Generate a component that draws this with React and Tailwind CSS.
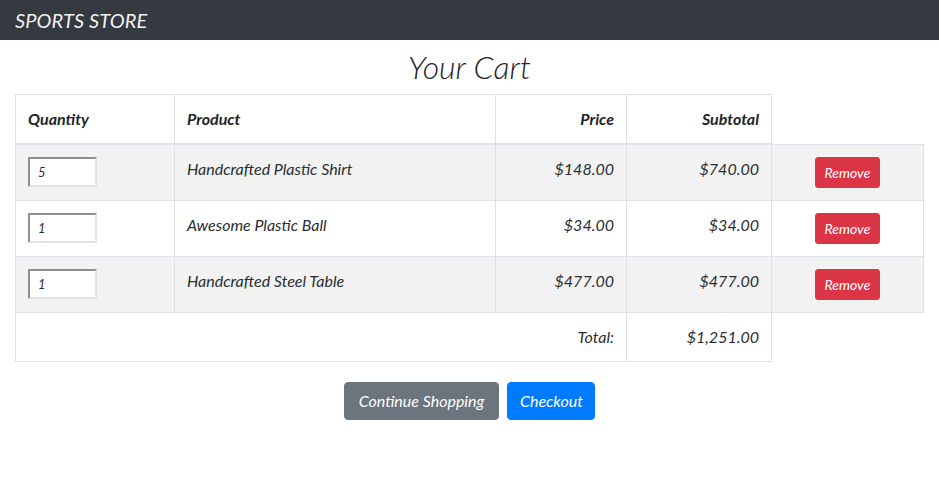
import React from "react";

const items = [
  { q: 5, name: "Handcrafted Plastic Shirt", price: "$148.00", sub: "$740.00" },
  { q: 1, name: "Awesome Plastic Ball", price: "$34.00", sub: "$34.00" },
  { q: 1, name: "Handcrafted Steel Table", price: "$477.00", sub: "$477.00" },
];

export default function App() {
  return (
    <div className="bg-white text-[#212529] italic">
      <div className="font-['Lato','Open_Sans',sans-serif]">
        <div className="h-[40px] bg-[#343a40] flex items-center px-[15px]">
          <span className="text-[20px] text-[#f2f2f2] tracking-[0.1px]">SPORTS STORE</span>
        </div>
        <div className="px-[15px]">
          <h2 className="text-center text-[32px] leading-[38px] mt-[8px] mb-[8px] font-light">Your Cart</h2>
          <table className="w-full border-collapse text-[16px] leading-[24px] text-[#2a2e33]">
            <thead>
              <tr>
                <th className="text-left font-bold text-[#212529] border border-[#dee2e6] border-b-2 px-[12px] py-[12px] w-[159px]">Quantity</th>
                <th className="text-left font-bold text-[#212529] border border-[#dee2e6] border-b-2 px-[12px] py-[12px] w-[321px]">Product</th>
                <th className="text-right font-bold text-[#212529] border border-[#dee2e6] border-b-2 px-[12px] py-[12px] w-[131px]">Price</th>
                <th className="text-right font-bold text-[#212529] border border-[#dee2e6] border-b-2 px-[12px] py-[12px] w-[145px]">Subtotal</th>
              </tr>
            </thead>
            <tbody>
              {items.map((it, i) => (
                <tr key={i} className={i % 2 === 0 ? "bg-[#f2f2f2]" : "bg-white"}>
                  <td className="border border-[#dee2e6] px-[12px] py-[12px] align-top">
                    <input
                      defaultValue={it.q}
                      className="block w-[69px] h-[30px] px-[8px] text-[13px] italic bg-white border-2 border-t-[#8f8f8f] border-l-[#8f8f8f] border-b-[#e3e3e3] border-r-[#e3e3e3] outline-none"
                    />
                  </td>
                  <td className="border border-[#dee2e6] px-[12px] py-[12px] align-top">{it.name}</td>
                  <td className="border border-[#dee2e6] px-[12px] py-[12px] align-top text-right">{it.price}</td>
                  <td className="border border-[#dee2e6] px-[12px] py-[12px] align-top text-right">{it.sub}</td>
                  <td className="border border-[#dee2e6] px-[12px] py-[12px] align-top text-center">
                    <button className="italic bg-[#dc3545] text-white text-[14px] leading-[21px] px-[8px] py-[4px] border border-[#dc3545] rounded-[3px] w-[65px]">
                      Remove
                    </button>
                  </td>
                </tr>
              ))}
            </tbody>
            <tfoot>
              <tr>
                <td colSpan={3} className="border border-[#dee2e6] px-[12px] py-[12px] text-right">Total:</td>
                <td className="border border-[#dee2e6] px-[12px] py-[12px] text-right">$1,251.00</td>
              </tr>
            </tfoot>
          </table>
          <div className="flex justify-center gap-[8px] mt-[20px]">
            <button className="italic bg-[#6c757d] text-white text-[16px] leading-[24px] px-[12px] py-[6px] border border-[#6c757d] rounded-[4px] w-[155px]">
              Continue Shopping
            </button>
            <button className="italic bg-[#007bff] text-white text-[16px] leading-[24px] px-[12px] py-[6px] border border-[#007bff] rounded-[4px] w-[88px]">
              Checkout
            </button>
          </div>
        </div>
      </div>
    </div>
  );
}
